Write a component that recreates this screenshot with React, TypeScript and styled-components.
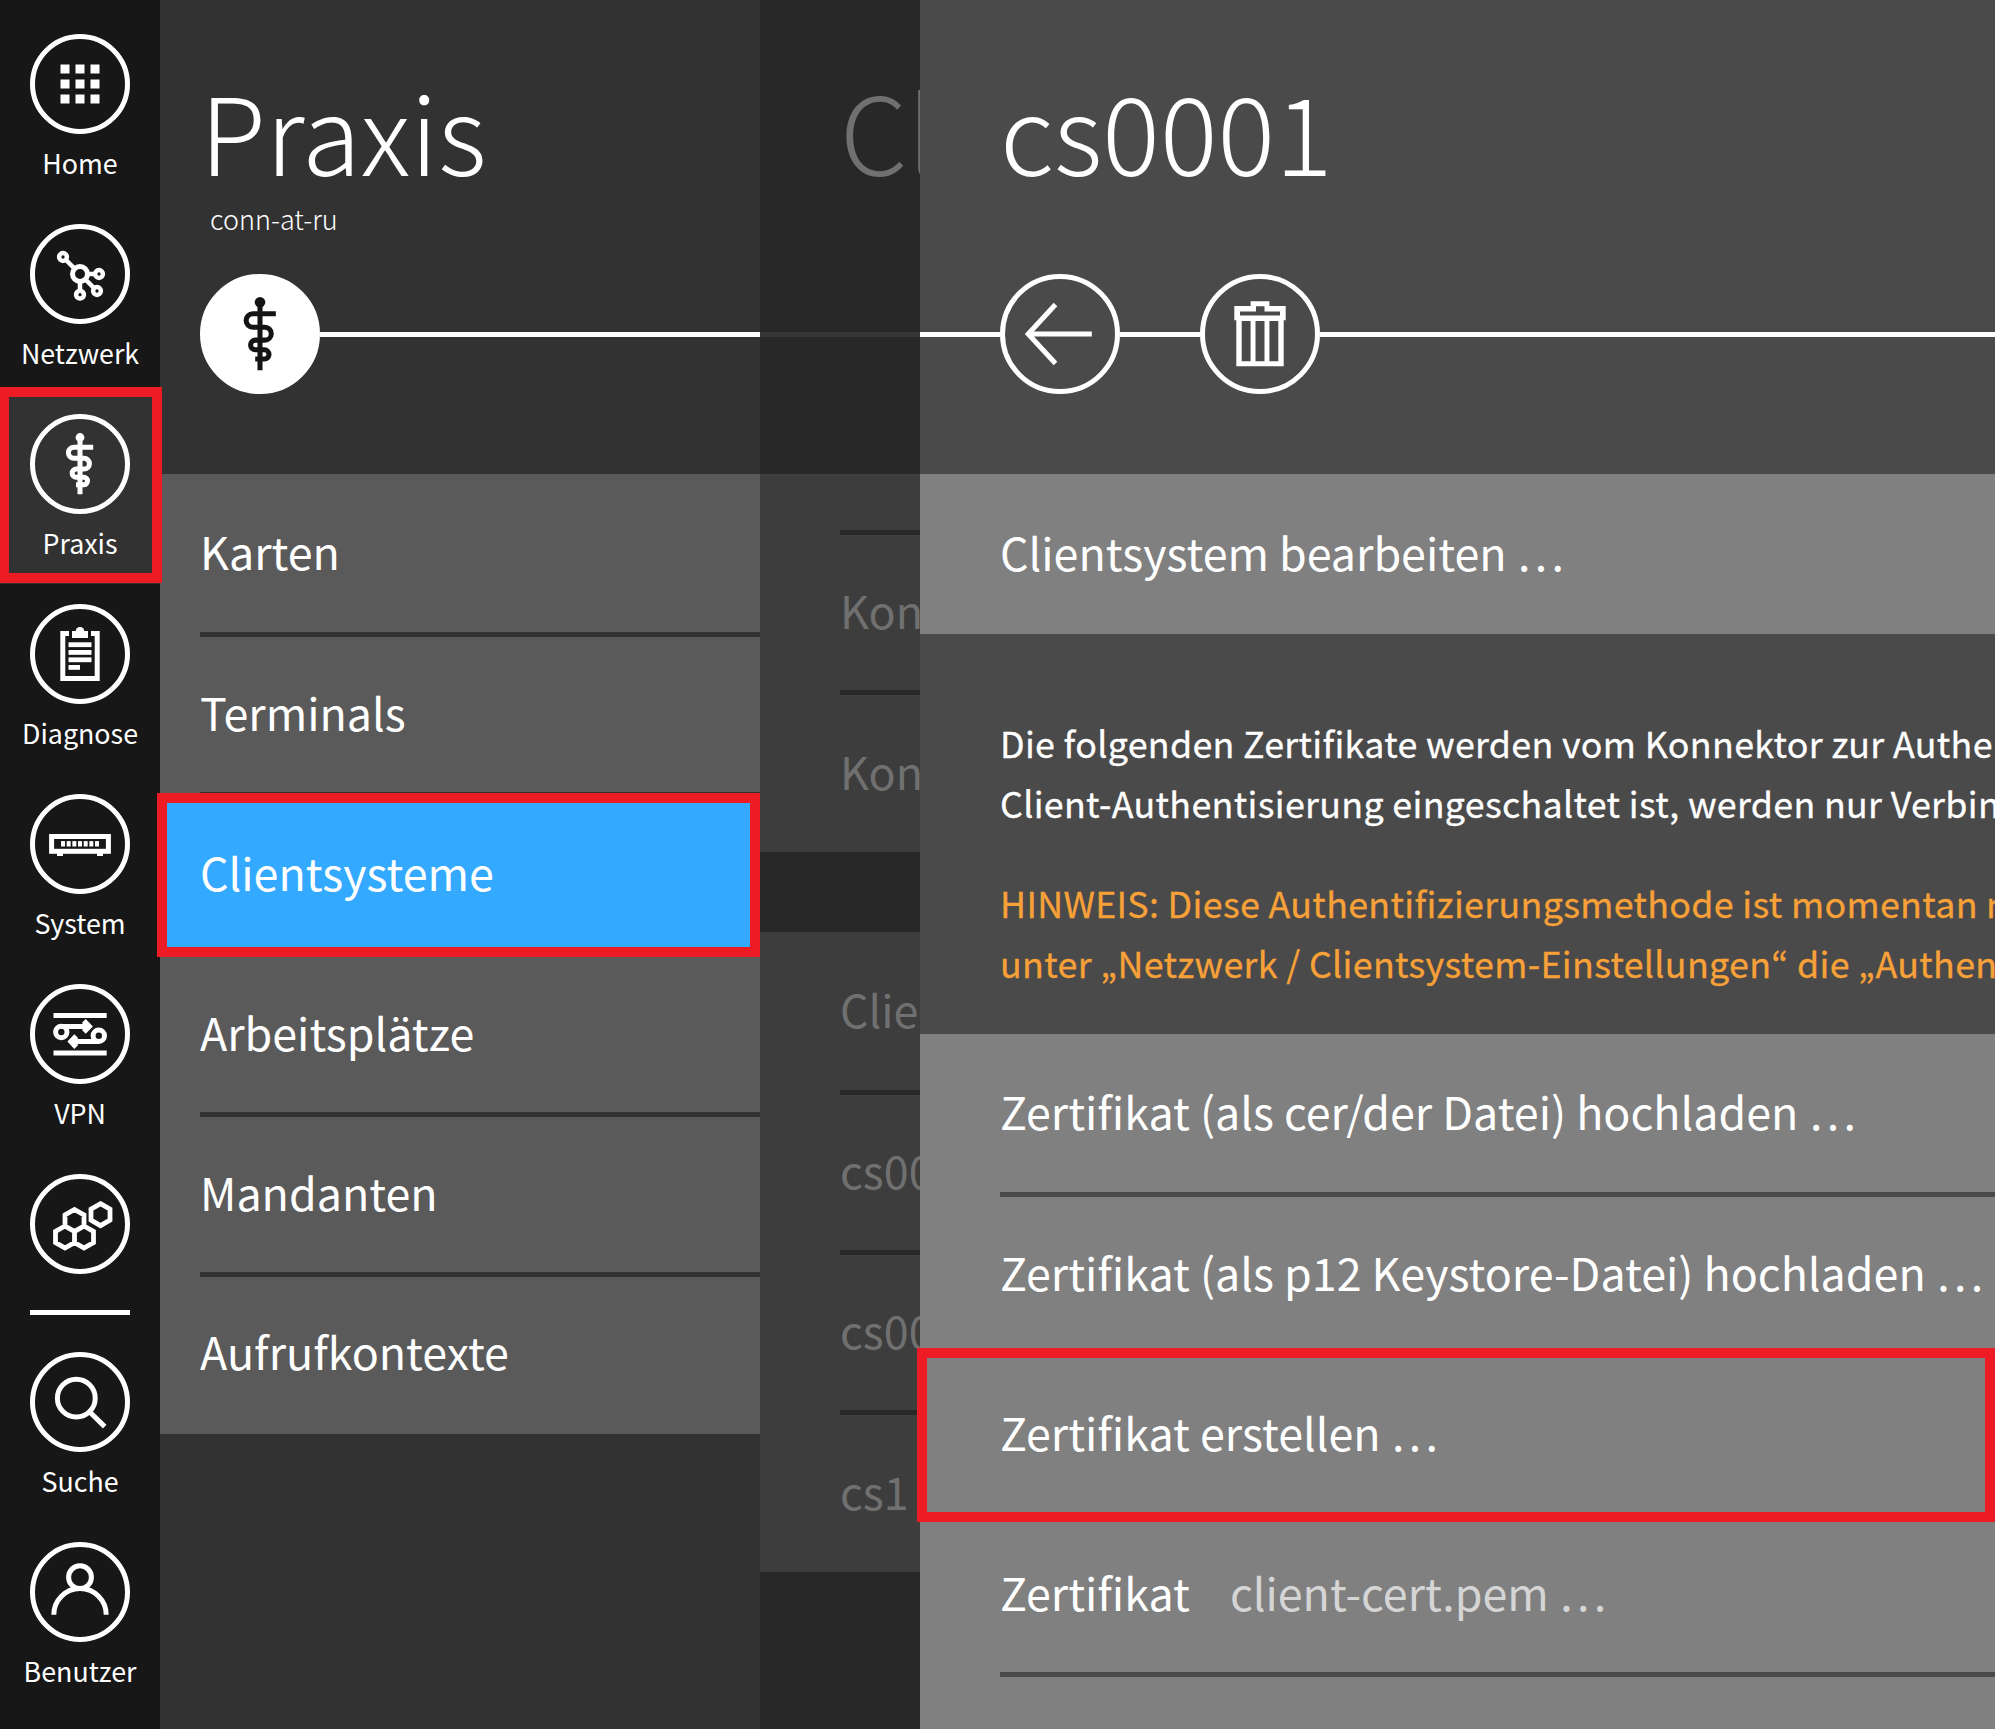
import React from "react";
import styled, { createGlobalStyle } from "styled-components";

const GlobalStyle = createGlobalStyle`
  *, *::before, *::after { box-sizing: border-box; }
  body {
    margin: 0;
    background: #282828;
    color: #fff;
    font-family: "Noto Sans CJK SC", "Noto Sans", sans-serif;
    overflow: hidden;
  }
  ul { list-style: none; margin: 0; padding: 0; }
  h1, p { margin: 0; font-weight: 400; }
`;

const RED = "#ed1c24";

const Shell = styled.div`
  display: flex;
  width: 1995px;
  height: 1729px;
  overflow: hidden;
`;

/* ---------- navigation bar ---------- */

const NavBar = styled.nav`
  flex: none;
  display: flex;
  flex-direction: column;
  width: 160px;
  padding-top: 14px;
  background: #171717;
`;

const NavItem = styled.a<{ $active?: boolean; $bare?: boolean }>`
  position: relative;
  display: flex;
  flex-direction: column;
  align-items: center;
  flex: none;
  height: ${(p) => (p.$bare ? 156 : 190)}px;
  padding-top: 20px;
  background: ${(p) => (p.$active ? "#323232" : "transparent")};
`;

const NavCircle = styled.span`
  display: block;
  width: 100px;
  height: 100px;
  border: 5px solid #fff;
  border-radius: 50%;
  svg { display: block; margin: -5px; }
`;

const NavLabel = styled.span`
  margin-top: 9px;
  font-size: 26.8px;
  line-height: 40px;
  white-space: nowrap;
`;

const NavRule = styled.div`
  flex: none;
  width: 100px;
  height: 5px;
  margin: 0 auto 17px;
  background: #fff;
`;

const Highlight = styled.span<{ $top: number; $right: number; $bottom: number; $left: number }>`
  position: absolute;
  z-index: 5;
  top: ${(p) => p.$top}px;
  right: ${(p) => p.$right}px;
  bottom: ${(p) => p.$bottom}px;
  left: ${(p) => p.$left}px;
  border: 10px solid ${RED};
  pointer-events: none;
`;

/* ---------- panels ---------- */

type Tone = { bg: string; list: string; text: string; line: string };

const TONES: Record<string, Tone> = {
  praxis: { bg: "#323232", list: "#5a5a5a", text: "#ffffff", line: "#ffffff" },
  clients: { bg: "#282828", list: "#3d3d3d", text: "#707070", line: "#353535" },
  detail: { bg: "#4a4a4a", list: "#808080", text: "#ffffff", line: "#ffffff" },
};

const Panel = styled.section<{ $tone: Tone; $width?: number; $clip?: boolean }>`
  position: relative;
  display: flex;
  flex-direction: column;
  flex: ${(p) => (p.$width ? "none" : "1")};
  width: ${(p) => (p.$width ? `${p.$width}px` : "auto")};
  min-width: 0;
  overflow: ${(p) => (p.$clip ? "hidden" : "visible")};
  background: ${(p) => p.$tone.bg};
  color: ${(p) => p.$tone.text};
`;

const Header = styled.header`
  flex: none;
  height: 474px;
  padding-top: 57px;
`;

const Title = styled.h1<{ $indent: number }>`
  && {
    height: 142px;
    padding-left: ${(p) => p.$indent}px;
    font-size: 107.6px;
    font-weight: 300;
    line-height: 144px;
    white-space: nowrap;
  }
`;

const Subtitle = styled.p`
  && {
    height: 40px;
    margin-bottom: 35px;
    padding-left: 50px;
    font-size: 27px;
    font-weight: 300;
    line-height: 40px;
  }
`;

const ActionBar = styled.div<{ $indent: number }>`
  display: flex;
  align-items: center;
  height: 120px;
  padding-left: ${(p) => p.$indent}px;
`;

const Track = styled.span<{ $color: string; $width?: number }>`
  flex: ${(p) => (p.$width ? "none" : "1")};
  width: ${(p) => (p.$width ? `${p.$width}px` : "auto")};
  height: 5px;
  margin-top: 1px;
  background: ${(p) => p.$color};
`;

const ActionCircle = styled.span<{ $fill: string }>`
  flex: none;
  display: block;
  width: 120px;
  height: 120px;
  border: 5px solid #fff;
  border-radius: 50%;
  background: ${(p) => p.$fill};
  svg { display: block; margin: -5px; }
`;

const List = styled.ul<{ $tone: Tone }>`
  flex: none;
  background: ${(p) => p.$tone.list};
`;

type RowShift = "up" | "down";

const lineHeights = { up: 154, mid: 156, down: 158 };

const Row = styled.li<{ $indent: number; $selected?: boolean; $height?: number; $shift?: RowShift }>`
  position: relative;
  display: flex;
  gap: 40px;
  height: ${(p) => p.$height ?? 160}px;
  padding: 0 0 0 ${(p) => p.$indent}px;
  background: ${(p) => (p.$selected ? "#33a9ff" : "transparent")};
  font-size: 44.8px;
  line-height: ${(p) => lineHeights[p.$shift ?? "mid"]}px;
  white-space: nowrap;
`;

const Divider = styled.li<{ $indent: number; $color: string }>`
  position: relative;
  height: 5px;
  margin: -2px 0 -3px ${(p) => p.$indent}px;
  background: ${(p) => p.$color};
`;

const Value = styled.span`
  color: #d5d5d5;
`;

const Spacer = styled.div`
  flex: none;
  height: 80px;
`;

const Notes = styled.div`
  flex: none;
  display: flex;
  flex-direction: column;
  gap: 40px;
  height: 400px;
  padding: 78px 0 0 80px;
  font-family: "Noto Sans CJK KR", "Noto Sans", sans-serif;
  font-size: 35.8px;
  line-height: 60px;
  letter-spacing: 0.32px;
  -webkit-text-stroke: 0.3px currentColor;
  white-space: nowrap;
  overflow: hidden;
`;

const Info = styled.p`
  color: #fff;
`;

const Hint = styled.p`
  color: #f7a138;
`;

/* ---------- icons ---------- */

const Icon = ({ size = 100, box = 100, color = "#fff", sw = 5, children }: {
  size?: number; box?: number; color?: string; sw?: number; children: React.ReactNode;
}) => (
  <svg width={size} height={size} viewBox={`0 0 ${box} ${box}`} fill="none" stroke={color} strokeWidth={sw}>
    {children}
  </svg>
);

const HomeIcon = () => (
  <Icon>
    <g fill="#fff" stroke="none">
      {[30.5, 45.5, 60.5].map((y) => [30.5, 45.5, 60.5].map((x) => (
        <rect key={`${x}-${y}`} x={x} y={y} width="9" height="9" />
      )))}
    </g>
  </Icon>
);

const NetworkIcon = () => (
  <Icon sw={4.5}>
    <circle cx="50" cy="50" r="7.5" strokeWidth="5" />
    <circle cx="33" cy="33" r="3.9" />
    <circle cx="69" cy="50" r="3.9" />
    <circle cx="67" cy="67" r="3.9" />
    <circle cx="50" cy="70.7" r="3.9" />
    <path d="M36 36L44.5 44.5M57.5 50H65.5M55.5 55.5L64 64M50 57.5V67" />
  </Icon>
);

const StaffIcon = ({ size = 100, color = "#fff", sw = 5 }: { size?: number; color?: string; sw?: number }) => (
  <Icon size={size} color={color} sw={sw}>
    <circle cx="50" cy="23.5" r="4.4" fill={color} stroke="none" />
    <path d="M50 24V80.3M63.2 33.2H44A5.5 5.5 0 0 0 44 44.3H54A5.4 5.4 0 0 1 54 55.1H46.2A4 4 0 0 0 46.2 63.2H53.7A3.8 3.8 0 0 1 53.7 70.8H46" />
  </Icon>
);

const ClipboardIcon = () => (
  <Icon>
    <path d="M39 29.5H32.8V74.5H67.2V29.5H61" />
    <g fill="#fff" stroke="none">
      <rect x="42" y="27" width="16" height="7" />
      <circle cx="50" cy="27.3" r="4.3" />
      <rect x="38.5" y="38.3" width="23" height="4.8" />
      <rect x="38.5" y="46" width="23" height="4.8" />
      <rect x="38.5" y="53.4" width="23" height="4.8" />
      <rect x="38.5" y="61" width="11.5" height="4.8" />
    </g>
  </Icon>
);

const DeviceIcon = () => (
  <Icon>
    <rect x="21.6" y="42.5" width="56.8" height="14.8" />
    <g fill="#fff" stroke="none">
      {[0, 1, 2, 3, 4, 5, 6].map((i) => (
        <rect key={i} x={31 + i * 5.67} y="47.1" width="4" height="5.4" />
      ))}
      <rect x="27" y="59" width="6" height="3" />
      <rect x="67" y="59" width="6" height="3" />
    </g>
  </Icon>
);

const VpnIcon = () => (
  <Icon>
    <path d="M23.5 31.4H76.7M23.5 69H76.7" />
    <circle cx="31.3" cy="48" r="5.7" />
    <circle cx="68.8" cy="51.8" r="5.7" />
    <path d="M31.3 42.4H54M68.8 57.6H46" />
    <g fill="#fff" stroke="none">
      <path d="M52.5 38.3L55.7 35L62.9 42.4L55.7 49.8L52.5 46.4Z" />
      <path d="M47.7 53.6L44.3 50.2L37.4 57.6L44.3 65L47.7 61.6Z" />
    </g>
  </Icon>
);

const hexagon = (cx: number, cy: number) =>
  `M${cx} ${cy - 11}L${cx + 9.5} ${cy - 5.5}V${cy + 5.5}L${cx} ${cy + 11}L${cx - 9.5} ${cy + 5.5}V${cy - 5.5}Z`;

const HexIcon = () => (
  <Icon sw={4.8}>
    <path d={[hexagon(44.5, 46.5), hexagon(35, 63), hexagon(54, 63), hexagon(70.5, 40.7)].join("")} />
  </Icon>
);

const SearchIcon = () => (
  <Icon>
    <circle cx="46.3" cy="46.2" r="18.9" />
    <path d="M59.8 60L74.7 74.6" />
  </Icon>
);

const UserIcon = () => (
  <Icon>
    <circle cx="50" cy="35.2" r="11.4" />
    <path d="M23.8 72.8A26.2 26.2 0 0 1 76.2 72.8" />
  </Icon>
);

const BackIcon = () => (
  <Icon size={120} box={120}>
    <path d="M55.5 30.5L28.2 60L55.5 89.5M28 60H91.8" />
  </Icon>
);

const TrashIcon = () => (
  <Icon size={120} box={120}>
    <path
      fill="#fff"
      stroke="none"
      fillRule="evenodd"
      d="M50.6 27.3H69.4V32H85.7V46.3H83.7V92.3H36.3V46.3H34.3V32H50.6ZM40 37.5V41.5H80V37.5H64.5V32.3H56V37.5ZM41.7 47V87.2H50.6V47ZM55.5 47V87.2H64.5V47ZM69.4 47V87.2H78.3V47Z"
    />
  </Icon>
);

/* ---------- content ---------- */

const NAV_MAIN = [
  { label: "Home", icon: <HomeIcon /> },
  { label: "Netzwerk", icon: <NetworkIcon /> },
  { label: "Praxis", icon: <StaffIcon />, active: true },
  { label: "Diagnose", icon: <ClipboardIcon /> },
  { label: "System", icon: <DeviceIcon /> },
  { label: "VPN", icon: <VpnIcon /> },
  { label: "", icon: <HexIcon /> },
];

const NAV_USER = [
  { label: "Suche", icon: <SearchIcon /> },
  { label: "Benutzer", icon: <UserIcon /> },
];

type Entry = {
  label: string;
  value?: string;
  selected?: boolean;
  marked?: boolean;
  shift?: RowShift;
  height?: number;
};

const NavEntries = ({ items }: { items: { label: string; icon: React.ReactNode; active?: boolean }[] }) => (
  <>
    {items.map((item) => (
      <NavItem key={item.label} $active={item.active} $bare={!item.label}>
        <NavCircle>{item.icon}</NavCircle>
        {item.label && <NavLabel>{item.label}</NavLabel>}
        {item.active && <Highlight $top={-7} $right={-2} $bottom={1} $left={-1} />}
      </NavItem>
    ))}
  </>
);

const EntryList = ({ tone, indent, items }: { tone: Tone; indent: number; items: Entry[] }) => (
  <List $tone={tone}>
    {items.map((item, i) => (
      <React.Fragment key={i}>
        {i > 0 && <Divider $indent={indent} $color={tone.bg} />}
        <Row $indent={indent} $selected={item.selected} $height={item.height} $shift={item.shift}>
          <span>{item.label}</span>
          {item.value && <Value>{item.value}</Value>}
          {item.selected && <Highlight $top={-1} $right={0} $bottom={-3} $left={-3} />}
          {item.marked && <Highlight $top={-6} $right={0} $bottom={-8} $left={-3} />}
        </Row>
      </React.Fragment>
    ))}
  </List>
);

export default function App() {
  const { praxis, clients, detail } = TONES;
  return (
    <>
      <GlobalStyle />
      <Shell>
        <NavBar>
          <NavEntries items={NAV_MAIN} />
          <NavRule />
          <NavEntries items={NAV_USER} />
        </NavBar>

        <Panel $tone={praxis} $width={600}>
          <Header>
            <Title $indent={40}>Praxis</Title>
            <Subtitle>conn-at-ru</Subtitle>
            <ActionBar $indent={40}>
              <ActionCircle $fill="#fff">
                <StaffIcon size={120} color="#141414" sw={4.2} />
              </ActionCircle>
              <Track $color={praxis.line} />
            </ActionBar>
          </Header>
          <EntryList
            tone={praxis}
            indent={40}
            items={[
              { label: "Karten", shift: "up" },
              { label: "Terminals" },
              { label: "Clientsysteme", selected: true },
              { label: "Arbeitsplätze" },
              { label: "Mandanten" },
              { label: "Aufrufkontexte", shift: "up" },
            ]}
          />
        </Panel>

        <Panel $tone={clients} $width={160} $clip>
          <Header>
            <Title $indent={80}>Clientsysteme</Title>
            <Subtitle />
            <ActionBar $indent={0}>
              <Track $color={clients.line} />
            </ActionBar>
          </Header>
          <EntryList
            tone={clients}
            indent={80}
            items={[{ label: "", height: 58 }, { label: "Konnektor" }, { label: "Konnektor", shift: "down" }]}
          />
          <Spacer />
          <EntryList
            tone={clients}
            indent={80}
            items={[
              { label: "Clientsystem", shift: "up" },
              { label: "cs0001" },
              { label: "cs0002" },
              { label: "cs1", shift: "down" },
            ]}
          />
        </Panel>

        <Panel $tone={detail}>
          <Header>
            <Title $indent={80}>cs0001</Title>
            <Subtitle />
            <ActionBar $indent={0}>
              <Track $color={detail.line} $width={80} />
              <ActionCircle $fill={detail.bg}><BackIcon /></ActionCircle>
              <Track $color={detail.line} $width={80} />
              <ActionCircle $fill={detail.bg}><TrashIcon /></ActionCircle>
              <Track $color={detail.line} />
            </ActionBar>
          </Header>
          <EntryList tone={detail} indent={80} items={[{ label: "Clientsystem bearbeiten …" }]} />
          <Notes>
            <Info>
              Die folgenden Zertifikate werden vom Konnektor zur Authentisierung
              <br />
              Client-Authentisierung eingeschaltet ist, werden nur Verbindungen
            </Info>
            <Hint>
              HINWEIS: Diese Authentifizierungsmethode ist momentan nicht
              <br />
              unter „Netzwerk / Clientsystem-Einstellungen“ die „Authentifizierung
            </Hint>
          </Notes>
          <EntryList
            tone={detail}
            indent={80}
            items={[
              { label: "Zertifikat (als cer/der Datei) hochladen …", shift: "up" },
              { label: "Zertifikat (als p12 Keystore-Datei) hochladen …" },
              { label: "Zertifikat erstellen …", marked: true },
              { label: "Zertifikat", value: "client-cert.pem …" },
              { label: "", height: 60 },
            ]}
          />
        </Panel>
      </Shell>
    </>
  );
}
